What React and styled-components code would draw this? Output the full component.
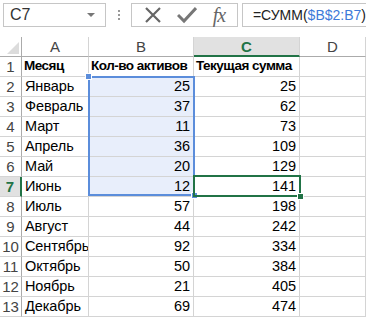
import React from "react";
import styled, { createGlobalStyle } from "styled-components";

const GlobalStyle = createGlobalStyle`
  html, body {
    margin: 0;
    padding: 0;
    background: #ffffff;
  }
  body {
    font-family: "Liberation Sans", Arial, sans-serif;
  }
`;

const Sheet = styled.div`
  width: 366px;
  height: 319px;
  overflow: hidden;
  background: #ffffff;
`;

const Toolbar = styled.div`
  display: flex;
  align-items: stretch;
  height: 24px;
  padding: 3px 0 10px 3px;
`;

const NameBox = styled.div`
  width: 105px;
  box-sizing: border-box;
  border: 1px solid #c6c6c6;
  display: flex;
  align-items: center;
  justify-content: space-between;
  padding: 0 10px 0 6px;
  font-size: 16px;
  color: #333;
`;

const DropArrow = styled.span`
  width: 0;
  height: 0;
  border-left: 4px solid transparent;
  border-right: 4px solid transparent;
  border-top: 4px solid #777;
`;

const Grip = styled.div`
  width: 26px;
  display: flex;
  flex-direction: column;
  align-items: center;
  justify-content: center;
  gap: 2px;
  span {
    width: 2px;
    height: 2px;
    background: #999;
  }
`;

const ButtonGroup = styled.div`
  width: 109px;
  box-sizing: border-box;
  border: 1px solid #c6c6c6;
  display: flex;
  align-items: center;
  justify-content: space-around;
  padding: 0 4px;
`;

const Fx = styled.span`
  font-family: "Liberation Serif", "Times New Roman", serif;
  font-style: italic;
  font-size: 20px;
  color: #666;
  letter-spacing: -1px;
`;

const FormulaInput = styled.div`
  flex: 1;
  margin-left: 4px;
  box-sizing: border-box;
  border: 1px solid #c6c6c6;
  border-right: none;
  display: flex;
  align-items: center;
  padding-left: 10px;
  font-size: 14px;
  color: #222;
  white-space: nowrap;
`;

const Ref = styled.span`
  color: #3d7ad9;
`;

const Grid = styled.div`
  position: relative;
  display: grid;
  grid-template-columns: 22px 67px 105px 106px 1fr;
  grid-auto-rows: 20px;
`;

const Corner = styled.div`
  position: relative;
  border-right: 1px solid #ababab;
  border-bottom: 1px solid #ababab;
  &::after {
    content: "";
    position: absolute;
    right: 2px;
    bottom: 2px;
    width: 0;
    height: 0;
    border-left: 12px solid transparent;
    border-bottom: 12px solid #dcdcdc;
  }
`;

const ColHead = styled.div`
  display: flex;
  align-items: center;
  justify-content: center;
  font-size: 15px;
  color: ${(p) => (p.$active ? "#217346" : "#444")};
  font-weight: ${(p) => (p.$active ? "bold" : "normal")};
  background: ${(p) => (p.$active ? "#e1e1e1" : "#ffffff")};
  border-right: 1px solid #d4d4d4;
  border-bottom: ${(p) => (p.$active ? "2px solid #217346" : "1px solid #ababab")};
  box-sizing: border-box;
`;

const RowHead = styled.div`
  display: flex;
  align-items: center;
  justify-content: center;
  font-size: 15px;
  color: ${(p) => (p.$active ? "#217346" : "#444")};
  font-weight: ${(p) => (p.$active ? "bold" : "normal")};
  background: ${(p) => (p.$active ? "#e1e1e1" : "#ffffff")};
  border-right: ${(p) => (p.$active ? "2px solid #217346" : "1px solid #ababab")};
  border-bottom: 1px solid #d4d4d4;
  box-sizing: border-box;
`;

const Cell = styled.div`
  display: flex;
  align-items: flex-end;
  justify-content: ${(p) => (p.$num ? "flex-end" : "flex-start")};
  padding: 0 3px 1px 3px;
  font-size: 14.5px;
  letter-spacing: -0.1px;
  line-height: 18px;
  color: #000;
  background: ${(p) => (p.$sel ? "#e8eefb" : "#ffffff")};
  border-right: 1px solid #d4d4d4;
  border-bottom: 1px solid #d4d4d4;
  box-sizing: border-box;
  white-space: nowrap;
  overflow: hidden;
`;

const HeadCell = styled(Cell)`
  font-weight: bold;
  font-size: 13.5px;
  letter-spacing: -0.5px;
  padding-left: 2px;
`;

const Range = styled.div`
  position: absolute;
  left: 88px;
  top: 39px;
  width: 107px;
  height: 120px;
  box-sizing: border-box;
  border: 2px solid #5b8ddb;
  pointer-events: none;
`;

const Handle = styled.div`
  position: absolute;
  width: 5px;
  height: 5px;
  background: ${(p) => p.$color};
  border: 1px solid #fff;
  ${(p) => p.$pos}
`;

const Active = styled.div`
  position: absolute;
  left: 193px;
  top: 138px;
  width: 108px;
  height: 22px;
  box-sizing: border-box;
  border: 2px solid #217346;
  pointer-events: none;
`;

const months = [
  ["Январь", 25, 25],
  ["Февраль", 37, 62],
  ["Март", 11, 73],
  ["Апрель", 36, 109],
  ["Май", 20, 129],
  ["Июнь", 12, 141],
  ["Июль", 57, 198],
  ["Август", 44, 242],
  ["Сентябрь", 92, 334],
  ["Октябрь", 50, 384],
  ["Ноябрь", 21, 405],
  ["Декабрь", 69, 474],
];

export default function App() {
  return (
    <Sheet>
      <GlobalStyle />
      <Toolbar>
        <NameBox>
          C7
          <DropArrow />
        </NameBox>
        <Grip>
          <span />
          <span />
          <span />
        </Grip>
        <ButtonGroup>
          <svg width="18" height="18" viewBox="0 0 18 18">
            <path d="M2 2 L16 16 M16 2 L2 16" stroke="#666" strokeWidth="2.2" fill="none" />
          </svg>
          <svg width="20" height="18" viewBox="0 0 20 18">
            <path d="M1 9 L7 15 L19 2" stroke="#777" strokeWidth="3" fill="none" />
          </svg>
          <Fx>fx</Fx>
        </ButtonGroup>
        <FormulaInput>
          =СУММ(<Ref>$B$2:B7</Ref>)
        </FormulaInput>
      </Toolbar>
      <Grid>
        <Corner />
        <ColHead>A</ColHead>
        <ColHead>B</ColHead>
        <ColHead $active>C</ColHead>
        <ColHead>D</ColHead>

        <RowHead>1</RowHead>
        <HeadCell>Месяц</HeadCell>
        <HeadCell>Кол-во активов</HeadCell>
        <HeadCell>Текущая сумма</HeadCell>
        <Cell />

        {months.map(([m, a, s], i) => {
          const row = i + 2;
          return (
            <React.Fragment key={m}>
              <RowHead $active={row === 7}>{row}</RowHead>
              <Cell>{m}</Cell>
              <Cell $num $sel={row <= 7}>{a}</Cell>
              <Cell $num>{s}</Cell>
              <Cell />
            </React.Fragment>
          );
        })}

        <Range>
          <Handle $color="#5b8ddb" $pos="left: -5px; top: -5px;" />
          <Handle $color="#5b8ddb" $pos="right: -5px; bottom: -5px;" />
        </Range>
        <Active>
          <Handle $color="#217346" $pos="right: -5px; bottom: -5px;" />
        </Active>
      </Grid>
    </Sheet>
  );
}
